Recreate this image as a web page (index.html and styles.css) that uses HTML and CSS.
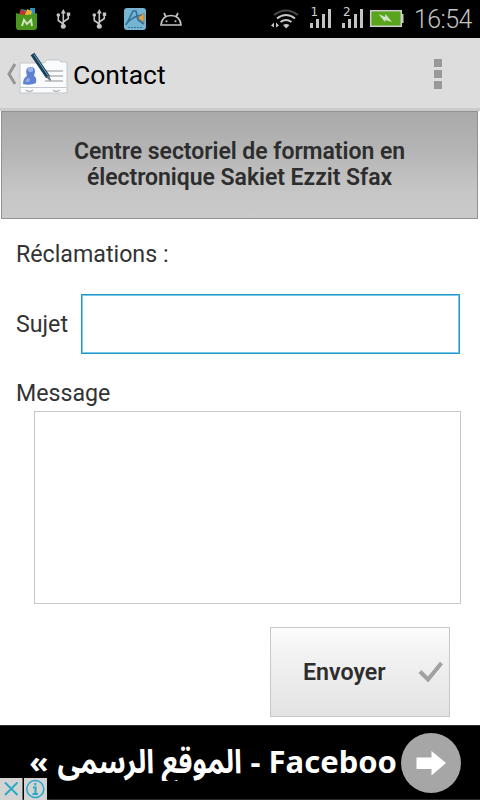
FILE: index.html
```html
<!DOCTYPE html>
<html lang="fr">
<head>
    <meta charset="utf-8">
    <title>Contact</title>
    <link rel="stylesheet" href="styles.css">
</head>

<body>
    <div class="status">
        <svg class="status_icons" width="190" height="38" viewBox="0 0 190 38">
            <path d="M19 15l2-6 5 1v5zM30 15V8h5v7z" fill="#2f8fbd"/>
            <path d="M19 16l2-7 5 3v4z" fill="#c9302b"/>
            <path d="M25 15l2-6 5 2-1 5z" fill="#e8b530"/>
            <path d="M16 13q10 4 21 0v14q0 3-3 3H19q-3 0-3-3z" fill="#4b961d"/>
            <path d="M22 26l2-6 3 4 4-4 1 6" fill="none" stroke="#cfe3bd" stroke-width="2"/>
            <g id="usb" fill="none" stroke="#c4c4c4" stroke-width="1.6">
                <path d="M63.3 12v14M63.3 24l-5-3.500v-5M63.3 22l5-3.500v-4"/>
                <path d="M60.800 13.500l2.500-4.500 2.500 4.500z" fill="#c4c4c4" stroke="none"/>
                <circle cx="63.3" cy="26.3" r="2.5" fill="#c4c4c4" stroke="none"/>
                <circle cx="58.3" cy="15" r="1.8" fill="#c4c4c4" stroke="none"/>
                <path d="M66.8 12.500h3.400v3.400h-3.400z" fill="#c4c4c4" stroke="none"/>
            </g>
            <use href="#usb" x="36"/>
            <rect x="124" y="8" width="22" height="22" rx="3" fill="#75b4d2"/>
            <path d="M126 25l7-14h3l2 9 6 4M126 24q7-8 16-9" fill="none" stroke="#326f99" stroke-width="1.6"/>
            <path d="M138 18l6-5v9z" fill="#e4a346" stroke="#7d6a4b" stroke-width=".6"/>
            <path d="M128 27.500h14" stroke="#397396" stroke-width="1" stroke-dasharray="2 1"/>
            <path d="M161 25q1-9.500 10-9.500t10 9.500zM166 17l-2-4M176 17l2-4" fill="none" stroke="#c4c4c4" stroke-width="1.700"/>
            <circle cx="166.500" cy="21.300" r="1" fill="#c4c4c4"/>
            <circle cx="175.500" cy="21.300" r="1" fill="#c4c4c4"/>
        </svg>
        <svg class="status_signal" width="142" height="38" viewBox="268 0 142 38">
            <g fill="none" stroke-width="2">
                <path d="M274 15q12-9 24 0" stroke="#4a4a4a"/>
                <path d="M277 18.500q9-7 18 0M280.500 22q5.500-4 11 0" stroke="#c8c8c8"/>
            </g>
            <path d="M283 25q3.300-2 6.500 0l-3.300 3.500z" fill="#c8c8c8"/>
            <path d="M271 25.500l3-3v5zM279 25.500l-3-3v5z" fill="#c8c8c8"/>
            <g fill="#c4c4c4">
                <path d="M310 23h3v5h-3zM316 19h3v9h-3zM322 14h3v14h-3zM328 9h3v19h-3z"/>
                <path d="M342 23h3v5h-3zM348 19h3v9h-3zM354 14h3v14h-3zM360 9h3v19h-3z"/>
            </g>
            <text x="310.500" y="15.500" class="sim">1</text>
            <text x="343" y="15.500" class="sim">2</text>
            <path d="M402 14h1.500v9h-1.500z" fill="#c8c8c8"/>
            <rect x="370.700" y="10.700" width="30.600" height="15.600" fill="#58a51d" stroke="#cdcdcd" stroke-width="1.500"/>
            <path d="M378.500 14l6.500 3 .500-3 6.500 8-6.500-2-.500 2z" fill="#d3e3c7"/>
        </svg>
        <span class="clock">16:54</span>
    </div>

    <div class="action_bar">
        <svg class="up" width="68" height="46" viewBox="0 0 68 46">
            <path d="M15 13L9 23l6 10" fill="none" stroke="#969696" stroke-width="3"/>
            <path d="M20 12h24l3-3h12l2 2h6v31H20z" fill="#fafbfc" stroke="#c3c6ca" stroke-width="1"/>
            <path d="M20 36.500h46.500" stroke="#c5c8cc"/>
            <path d="M26 39q3 3 7 0M53 39q3 3 7 0" fill="none" stroke="#b3b6ba" stroke-width="1.500"/>
            <path d="M23 33q0-6 4-8-3-9 4-9 6 0 3 9 3 1 2 7-6 3-13 1z" fill="#5e80d0"/>
            <ellipse cx="30.500" cy="18.500" rx="2.800" ry="2.500" fill="#9bb3eb"/>
            <path d="M25 31q1-4 4-4 2 2 0 4z" fill="#91aae5"/>
            <path d="M45 20h18M46 25h17M45 30h18" stroke="#8f9296" stroke-width="1.200"/>
            <path d="M32.500 3L48 26" stroke="#183e59" stroke-width="4.500"/>
            <path d="M34 3.500l14 21" stroke="#6fa3c0" stroke-width="1"/>
            <path d="M46 26l4 4 1-1-2-5z" fill="#65737c"/>
        </svg>
        <h1 class="title">Contact</h1>
        <div class="overflow"><i></i><i></i><i></i></div>
    </div>

    <div class="banner">Centre sectoriel de formation en<br>électronique Sakiet Ezzit Sfax</div>

    <form class="form">
        <p class="heading">Réclamations :</p>
        <div class="row">
            <label for="sujet">Sujet</label>
            <input type="text" name="sujet" id="sujet" class="subject">
        </div>
        <label for="message" class="message_label">Message</label>
        <textarea name="message" id="message" class="message"></textarea>
        <button type="button" class="send">
            <span>Envoyer</span>
            <svg width="26" height="24" viewBox="0 0 26 24">
                <path d="M2 11.500l8 8L23.500 3" fill="none" stroke="#a0a0a0" stroke-width="4"/>
            </svg>
        </button>
    </form>

    <div class="ad">
        <div class="ad_text" dir="rtl"><span class="latin">Faceboo -</span> <span class="arabic">الموقع الرسمي</span> <span class="latin">»</span></div>
        <svg class="ad_arrow" width="60" height="60" viewBox="0 0 60 60">
            <circle cx="30" cy="30" r="30" fill="#a6a6a6"/>
            <path d="M15.500 24.500h15V18L45 30 30.500 42.500V36h-15z" fill="#fff"/>
        </svg>
        <svg class="ad_badge" width="47" height="22" viewBox="0 0 47 22">
            <path d="M0 0h22.500v22H0zM24 0h23v22H24z" fill="#d3d3d3"/>
            <path d="M5 4.500l12.500 12.500M17.500 4.500L5 17" stroke="#26a9c6" stroke-width="1.800"/>
            <circle cx="35.300" cy="11" r="8.500" fill="none" stroke="#26a9c6" stroke-width="1.500"/>
            <path d="M35.300 5v2.500M33 9.500h2.500V16M32.500 16h5.500" fill="none" stroke="#26a9c6" stroke-width="2"/>
        </svg>
    </div>
</body>

</html>
```
FILE: styles.css
```css
* {
    box-sizing: border-box;
}

body {
    margin: 0;
    width: 480px;
    height: 800px;
    overflow: hidden;
    background-color: #fff;
    color: #333;
    font-family: Roboto, sans-serif;
    font-size: 23.200px;
}

.status {
    display: flex;
    height: 38px;
    background-color: #000;
}

.status_signal {
    margin-left: 78px;
}

.sim {
    font-size: 12px;
    font-family: "DejaVu Sans", sans-serif;
    fill: #d0d0d0;
}

.clock {
    margin-left: 4px;
    color: #c4c4c4;
    font-size: 25px;
    font-weight: 300;
    letter-spacing: -0.6px;
    line-height: 40px;
}

.action_bar {
    display: flex;
    align-items: center;
    height: 73px;
    background-color: #ddd;
    border-bottom: 3px solid #cbcbcb;
}

.up {
    margin-top: 2px;
}

.title {
    margin: 2px 0 0 5px;
    color: #000;
    font-size: 26.500px;
    font-weight: 400;
}

.overflow {
    display: grid;
    gap: 3px;
    margin: 2px 38px 0 auto;
}

.overflow i {
    width: 8px;
    height: 8px;
    background-color: #999;
}

.banner {
    height: 108px;
    margin: 0 2px 0 1px;
    padding-top: 27px;
    border: 1px solid #929292;
    background-image: linear-gradient(#aaa, #b4b4b4 35%, #c6c6c6 75%, #cacaca);
    color: #2d2d2d;
    font-size: 23px;
    font-weight: 600;
    letter-spacing: -0.04px;
    line-height: 26px;
    text-align: center;
}

.form {
    display: flex;
    flex-direction: column;
    height: 506px;
    padding: 20px 20px 0 16px;
}

.heading {
    margin: 0 0 25px;
    line-height: 30px;
}

.row {
    display: flex;
    align-items: center;
    justify-content: space-between;
    height: 60px;
}

.subject {
    width: 379px;
    height: 60px;
    border: 1px solid #1f97c9;
    background-color: #fff;
    box-shadow: inset 0 0 0 1px #7cc8e8;
    outline: none;
}

.message_label {
    margin-top: 24px;
    line-height: 30px;
}

.message {
    width: 427px;
    height: 193px;
    margin: 3px 0 0 18px;
    border: 1px solid #c7c7c7;
    resize: none;
}

.send {
    display: flex;
    align-items: center;
    justify-content: space-between;
    align-self: flex-end;
    width: 180px;
    height: 90px;
    margin: 23px 10px 0 0;
    padding: 0 5px 0 32px;
    border: 1px solid #c8c8c8;
    background-image: linear-gradient(#fcfcfc, #f2f2f2 30%, #e3e3e3);
    color: #2d2d2d;
    font-family: Roboto, sans-serif;
    font-size: 23.200px;
    font-weight: 600;
}

.ad {
    position: relative;
    display: flex;
    height: 75px;
    padding: 7px 19px 0 0;
    border-top: 1px solid #2a2a2a;
    border-bottom: 1px solid #2a2a2a;
    background-color: #000;
}

.ad_text {
    width: 397px;
    height: 48px;
    margin-right: 4px;
    overflow: hidden;
    color: #fff;
    font-weight: 700;
    line-height: 57px;
    white-space: nowrap;
}

.latin {
    font-family: "Noto Sans", "DejaVu Sans", sans-serif;
    font-size: 31px;
}

/* narrower, taller arabic letters */
.arabic {
    display: inline-block;
    margin: 0 3px 0 -24px;
    font-family: "Noto Sans Arabic", "DejaVu Sans", sans-serif;
    font-size: 33px;
    line-height: 44px;
    transform: scaleX(0.87);
    transform-origin: right;
}

/* close and info marks sit over the ad's corner */
.ad_badge {
    position: absolute;
    left: 0;
    bottom: -1px;
}
```
